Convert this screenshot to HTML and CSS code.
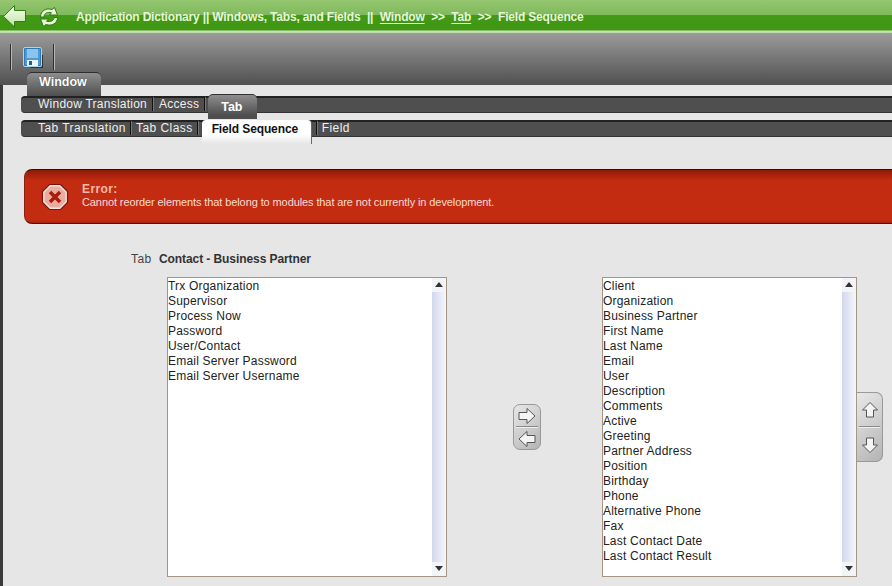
FILE: index.html
```html
<!DOCTYPE html>
<html lang="en">
<head>
<meta charset="utf-8">
<title>Field Sequence</title>
<link rel="stylesheet" href="styles.css">
</head>
<body>
<div class="page">
  <header class="topbar">
    <svg class="back" width="24" height="24" viewBox="0 0 24 24"><defs><linearGradient id="bk" x1="0" y1="0" x2="0" y2="1"><stop offset="0" stop-color="#fafff2"/><stop offset="1" stop-color="#bfe0a2"/></linearGradient></defs><path d="M1.500 12.500 L12.500 1.500 V6.500 H23.500 V17.500 H12.500 V23 Z" fill="url(#bk)" stroke="#2f7f10" stroke-width="1" stroke-linejoin="round"/></svg>
    <svg class="refresh" width="20" height="20" viewBox="0 0 20 20"><path d="M1.500 10 C1.500 4 7 0.500 13 2.500 L15.500 0.500 L18.500 8 L10.500 8 L12.500 5.800 C8.500 4.500 5 6.500 5 10 Z" fill="#eaf7da" stroke="#2f7a12" stroke-width="1" stroke-linejoin="round"/><path d="M18.500 10.500 C18.500 16 13 19.500 7 17.500 L4.500 19.500 L1.500 12 L9.500 12 L7.500 14.200 C11.500 15.500 15 13.500 15 10.500 Z" fill="#eaf7da" stroke="#2f7a12" stroke-width="1" stroke-linejoin="round"/></svg>
    <div class="crumbs">Application Dictionary || Windows, Tabs, and Fields<span class="gap">||</span><a class="link">Window</a><span class="gap">&gt;&gt;</span><a class="link">Tab</a><span class="gap">&gt;&gt;</span>Field Sequence</div>
  </header>
  <div class="toolbar">
    <span class="tool-sep"></span>
    <svg class="save" width="22" height="22" viewBox="0 0 22 22"><path d="M20 8 V21 H6 L8 20 H19 V8Z" fill="#333"/><rect x="0.500" y="0.500" width="18" height="19" rx="1.500" fill="#2e78b4" stroke="#a9d6f2"/><rect x="2" y="2" width="15" height="16" fill="#4c9bd6"/><rect x="4" y="2" width="11" height="9" fill="#8cc4ec"/><rect x="4" y="13" width="11" height="6" fill="#eaf4fb"/><rect x="6" y="14" width="3" height="4" fill="#1d5f94"/></svg>
    <span class="tool-sep"></span>
  </div>
  <main class="main">
    <div class="tab-top"><div class="tab-primary">Window</div></div>
    <nav class="tab-bar first">
      <span class="tab-item">Window Translation</span><span class="tab-sep"></span>
      <span class="tab-item">Access</span><span class="tab-sep"></span>
      <div class="tab-secondary">Tab</div>
    </nav>
    <nav class="tab-bar second">
      <span class="tab-item">Tab Translation</span><span class="tab-sep"></span>
      <span class="tab-item">Tab Class</span><span class="tab-sep"></span>
      <div class="tab-current">Field Sequence</div><span class="tab-sep"></span>
      <span class="tab-item">Field</span>
    </nav>
    <section class="error">
      <svg class="error-icon" width="28" height="28" viewBox="0 0 28 28"><path d="M8.500 1.500 H19.500 L26.500 8.500 V19.500 L19.500 26.500 H8.500 L1.500 19.500 V8.500 Z" fill="#f8e4de" stroke="#7a1408" stroke-width="1.200"/><path d="M9.500 3.500 H18.500 L24.500 9.500 V18.500 L18.500 24.500 H9.500 L3.500 18.500 V9.500 Z" fill="#e8ada0"/><path d="M9 9 L19 19 M19 9 L9 19" stroke="#a81c0c" stroke-width="3.500"/></svg>
      <div class="error-text">
        <div class="error-title">Error:</div>
        <div class="error-msg">Cannot reorder elements that belong to modules that are not currently in development.</div>
      </div>
    </section>
    <div class="field-line"><span class="field-label">Tab</span><span class="field-value">Contact - Business Partner</span></div>
    <div class="transfer">
      <div class="listbox left-list">
        <div class="items">
          <div>Trx Organization</div><div>Supervisor</div><div>Process Now</div><div>Password</div><div>User/Contact</div><div>Email Server Password</div><div>Email Server Username</div>
        </div>
        <div class="scroll"><span class="arrow up"></span><span class="track"></span><span class="arrow down"></span></div>
      </div>
      <div class="btn-group move">
        <button class="btn"><svg width="20" height="18" viewBox="0 0 20 18"><path d="M2 5.500 H10 V1.500 L18 9 L10 16.500 V12.500 H2 Z" fill="#f4f4f4" stroke="#555"/></svg></button>
        <span class="btn-div"></span>
        <button class="btn"><svg width="20" height="18" viewBox="0 0 20 18"><path d="M18 5.500 H10 V1.500 L2 9 L10 16.500 V12.500 H18 Z" fill="#f4f4f4" stroke="#555"/></svg></button>
      </div>
      <div class="listbox right-list">
        <div class="items">
          <div>Client</div><div>Organization</div><div>Business Partner</div><div>First Name</div><div>Last Name</div><div>Email</div><div>User</div><div>Description</div><div>Comments</div><div>Active</div><div>Greeting</div><div>Partner Address</div><div>Position</div><div>Birthday</div><div>Phone</div><div>Alternative Phone</div><div>Fax</div><div>Last Contact Date</div><div>Last Contact Result</div>
        </div>
        <div class="scroll"><span class="arrow up"></span><span class="track"></span><span class="arrow down"></span></div>
      </div>
      <div class="btn-group order">
        <button class="btn"><svg width="18" height="18" viewBox="0 0 18 18"><path d="M5.500 16 V9 H1.500 L9 1.500 L16.500 9 H12.500 V16 Z" fill="#f4f4f4" stroke="#555"/></svg></button>
        <span class="btn-div"></span>
        <button class="btn"><svg width="18" height="18" viewBox="0 0 18 18"><path d="M5.500 2 V9 H1.500 L9 16.500 L16.500 9 H12.500 V2 Z" fill="#f4f4f4" stroke="#555"/></svg></button>
      </div>
    </div>
  </main>
</div>
</body>
</html>
```
FILE: styles.css
```css
* { box-sizing: border-box; }
html, body { margin: 0; padding: 0; }
body { font-family: "Liberation Sans", Arial, sans-serif; font-size: 12px; background: #e6e6e6; }
.page { width: 892px; height: 586px; overflow: hidden; position: relative; }

.topbar {
  height: 33px; display: flex; align-items: center;
  background: linear-gradient(#94c66f 0, #7fba5c 15px, #429a16 15px, #3f9612 30px, #cfe6bd 31px, #b8d6a5 33px);
}
.back { margin: -2px 0 0 2px; flex: none; }
.refresh { margin: 0 0 0 13px; flex: none; }
.crumbs { margin: 1px 0 0 17px; font-weight: bold; color: #e9f5dd; letter-spacing: -0.17px; white-space: nowrap; }
.link { text-decoration: underline; text-underline-offset: 2px; }
.gap { margin: 0 6.5px; }

.toolbar {
  height: 52px; display: flex; align-items: center; padding: 0 0 4px 10px;
  background: linear-gradient(#9b9b9b, #505050);
}
.tool-sep { width: 2px; height: 26px; background: linear-gradient(#2f2f2f, #2f2f2f) left/1px 100% no-repeat, #b5b5b5; }
.save { margin: 2px 8px 0 11px; flex: none; }

.main { border-left: 3px solid #3a3a3a; height: 501px; padding-left: 18px; }
.tab-top { height: 11px; position: relative; }
.tab-primary {
  position: absolute; left: 6px; top: -13px; width: 74px; height: 27px; padding: 2px 0 0 12px;
  border-radius: 5px 5px 0 0; border-top: 1px solid #2e2e2e;
  background: linear-gradient(#8e8e8e, #4e4e4e 90%);
  color: #fff; font-weight: bold; font-size: 12.5px; text-shadow: 0 0 1px #333;
}
.tab-bar {
  display: flex; align-items: center; height: 17px; padding-bottom: 2px; color: #eee; letter-spacing: 0.24px;
  border-radius: 4px 0 0 4px; border-top: 2px solid #222; border-bottom: 1px solid #333;
  background: #4f4f4f; padding-left: 17px; width: 871px; position: relative;
}
.tab-bar.second { margin-top: 7px; letter-spacing: 0.44px; }
.tab-sep { flex: none; width: 1px; height: 14px; background: #111; box-shadow: 1px 0 0 #777; margin: 0 6px 0 5px; }
.second .tab-sep { margin: 0 5px 0 4px; }
.tab-item { white-space: nowrap; }
.tab-secondary {
  position: relative; margin: -4px 0 -6px -3px; width: 49px; height: 25px; padding: 5px 0 0 13px;
  align-self: flex-start; flex: none; border-radius: 5px 5px 0 0; border-top: 1px solid #333;
  background: linear-gradient(#8e8e8e, #4e4e4e 85%);
  color: #fff; font-weight: bold; font-size: 12.5px; letter-spacing: 0;
}
.tab-current {
  position: relative; z-index: 1; margin: -2px 0 -8px -1px; width: 110px; height: 24px; padding: 2px 0 0 10px;
  align-self: flex-start; flex: none; border-radius: 4px 4px 0 0; letter-spacing: -0.12px;
  background: linear-gradient(#fff 60%, #e6e6e6); color: #111; font-weight: bold;
  border-right: 1px solid #666;
}

.error {
  margin: 32px 0 0 3px; height: 55px; width: 868px; display: flex; align-items: center;
  border-radius: 8px 0 0 8px; border-top: 1px solid #3a0a02; border-bottom: 1px solid #4e1006; border-left: 1px solid #8b2210;
  background: linear-gradient(#8e1c08 0, #c42c12 11px, #c42c12 50px, #a82410);
}
.error-icon { flex: none; margin: 0 0 0 16px; }
.error-text { margin: 0 0 4px 13px; }
.error-title { color: #f6b9a8; font-weight: bold; font-size: 12px; letter-spacing: 0.4px; line-height: 14px; }
.error-msg { color: #f8dcd2; font-size: 11px; line-height: 12px; letter-spacing: -0.1px; white-space: nowrap; }

.field-line { display: flex; margin: 28px 0 0 110px; height: 14px; line-height: 14px; }
.field-label { color: #444; width: 28px; letter-spacing: 0.4px; }
.field-value { color: #333; font-weight: bold; letter-spacing: -0.08px; }

.transfer { display: flex; align-items: flex-start; margin: 11px 0 0 146px; }
.listbox {
  display: flex; height: 300px; background: #fff; border: 1px solid #a39686; flex: none;
}
.left-list { width: 280px; }
.right-list { width: 255px; margin-left: 61px; }
.items { flex: 1; padding-top: 1px; color: #222; line-height: 15px; letter-spacing: 0.2px; white-space: nowrap; }
.scroll { width: 14px; display: flex; flex-direction: column; }
.track { flex: 1; background: linear-gradient(90deg, #d2d7ec, #f6f7fc); }
.arrow { height: 14px; background: #f3f4f8; position: relative; }
.arrow::after {
  content: ""; position: absolute; left: 3px; top: 4px;
  border-left: 4px solid transparent; border-right: 4px solid transparent;
}
.arrow.up::after { border-bottom: 5px solid #333; }
.arrow.down::after { border-top: 5px solid #333; }

.btn-group {
  display: flex; flex-direction: column; flex: none;
  border: 1px solid #999; background: linear-gradient(135deg, #e8e8e8, #b4b4b4);
}
.btn {
  display: flex; flex: 1; align-items: center; justify-content: center;
  width: 100%; padding: 0; border: 0; background: transparent;
}
.btn-div { height: 2px; margin: 0 2px; flex: none; background: linear-gradient(#8a8a8a 50%, #eee 50%); }
.move { width: 28px; height: 46px; margin: 127px 0 0 66px; border-radius: 7px; }
.order { width: 26px; height: 70px; margin-top: 115px; border-left: 0; border-radius: 0 7px 7px 0; }
```
